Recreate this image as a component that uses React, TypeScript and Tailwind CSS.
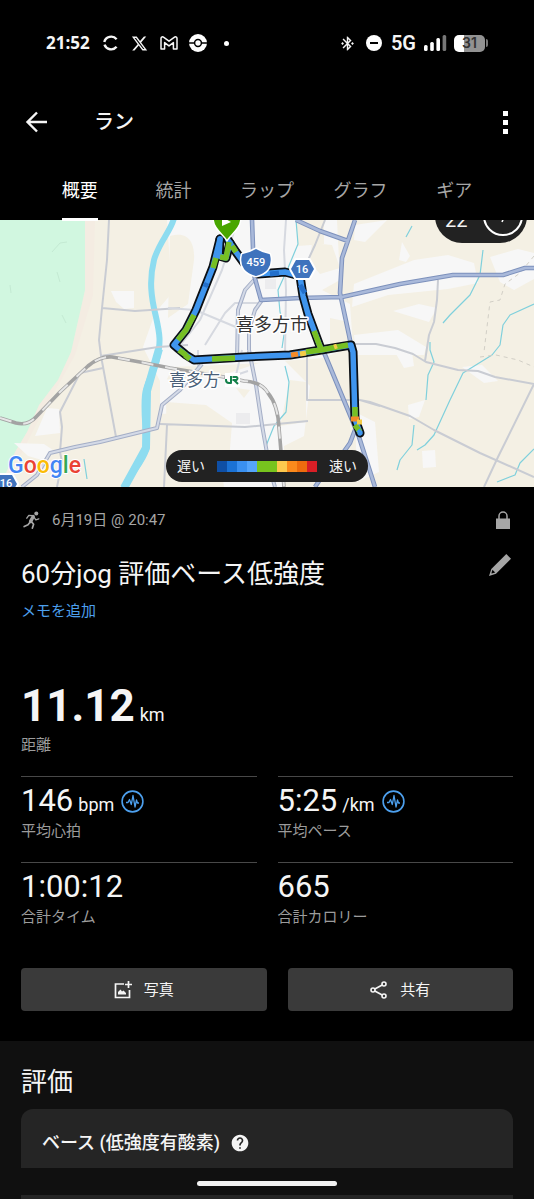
import React from "react";
import { FaXTwitter } from "react-icons/fa6";
import { MdBluetoothConnected, MdHelp } from "react-icons/md";

const TABS = ["概要", "統計", "ラップ", "グラフ", "ギア"];

const PACE_COLORS = [
  "bg-[#0f4fa5]",
  "bg-[#1b72d5]",
  "bg-[#3a90f0]",
  "bg-[#55a5fb]",
  "bg-[#77c41e]",
  "bg-[#77c41e]",
  "bg-[#fdc94e]",
  "bg-[#fb8a1c]",
  "bg-[#ee6c0e]",
  "bg-[#d91f26]",
];

const StatusBar = () => (
  <div className="flex items-center justify-between pl-[46px] pr-[46px] pt-[31px]">
    <div className="flex h-6 items-center">
      <span className="w-[57px] font-['Open_Sans','Inter',sans-serif] text-[17px] font-bold leading-6">21:52</span>
      <svg className="h-4 w-4" viewBox="0 0 16 16" fill="none" stroke="currentColor" strokeWidth="2.4">
        <path d="M1.3 7A7 6.8 0 0 1 13.6 4.2" />
        <path d="M1.5 9.6A7 6.8 0 0 0 13.6 11.8" />
      </svg>
      <FaXTwitter className="ml-3 h-[17px] w-[17px]" />
      <svg className="ml-3 h-[14px] w-[18px]" viewBox="0 0 18 14" fill="none" stroke="currentColor" strokeWidth="1.5" strokeLinejoin="round">
        <path d="M1 2.4V13h3.6V6.6L9 9.9l4.4-3.3V13H17V2.4C17 1 15.4 .4 14.2 1.3L9 5.2 3.8 1.3C2.6 .4 1 1 1 2.4Z" />
      </svg>
      <svg className="ml-[11px] h-[18px] w-[18px]" viewBox="0 0 18 18">
        <circle cx="9" cy="9" r="9" fill="#fff" />
        <path d="M0 9h5M13 9h5" stroke="#000" strokeWidth="1.3" />
        <circle cx="9" cy="9" r="3.4" fill="#fff" stroke="#000" strokeWidth="1.5" />
      </svg>
      <span className="ml-[17px] h-[5px] w-[5px] rounded-full bg-white" />
    </div>
    <div className="flex h-6 items-center">
      <MdBluetoothConnected className="h-[17px] w-[17px]" />
      <span className="ml-[10px] flex h-4 w-4 items-center justify-center rounded-full bg-white">
        <span className="h-[2px] w-2 bg-black" />
      </span>
      <span className="ml-[9px] font-['Roboto',sans-serif] text-[20px] font-semibold leading-6">5G</span>
      <svg className="ml-2 h-4 w-[23px]" viewBox="0 0 23 16" fill="#fff">
        <rect x="0" y="10" width="3.6" height="6" rx="1.5" />
        <rect x="6.2" y="7" width="3.6" height="9" rx="1.5" />
        <rect x="12.4" y="3" width="3.6" height="13" rx="1.5" />
        <rect x="18.6" y="0" width="3.6" height="16" rx="1.5" fill="#777" />
      </svg>
      <span className="ml-[7px] flex h-[17px] w-[31px] items-center justify-center rounded-[5px] bg-linear-to-r from-white from-33% to-[#929292] to-33% font-['Inter',sans-serif] text-[14px] font-semibold leading-4 text-[#333]">
        31
      </span>
      <span className="ml-px h-2 w-[2px] rounded-r bg-[#777]" />
    </div>
  </div>
);

const Header = () => (
  <header className="mt-[42px] flex h-[50px] items-center pl-[23px] pr-[26px]">
    <button type="button" aria-label="戻る">
      <svg className="h-[22px] w-[26px]" viewBox="0 0 26 22" fill="none" stroke="currentColor" strokeWidth="2.4">
        <path d="M24 11H5M14 1.500 4.500 11l9.500 9.500" />
      </svg>
    </button>
    <h1 className="ml-[45px] flex-1 text-[20px] font-medium leading-6">ラン</h1>
    <button type="button" aria-label="メニュー" className="flex flex-col gap-1">
      <span className="h-[5px] w-[5px] bg-white" />
      <span className="h-[5px] w-[5px] bg-white" />
      <span className="h-[5px] w-[5px] bg-white" />
    </button>
  </header>
);

const Tabs = () => (
  <nav className="relative z-10 mt-7 -mb-px grid grid-cols-5 px-[33px]">
    {TABS.map((tab, i) => (
      <button
        type="button"
        key={tab}
        className={
          i === 0
            ? "h-[46px] justify-self-center border-b-[3px] border-white pb-3 text-[18px] leading-6 text-white"
            : "h-[46px] justify-self-center border-b-[3px] border-transparent pb-3 text-[18px] leading-6 text-[#a6a6a6]"
        }
      >
        {tab}
      </button>
    ))}
  </nav>
);

const RouteMap = () => (
  <svg
    className="block h-[267px] w-full bg-[#f4f0e4]"
    viewBox="0 220 534 267"
    preserveAspectRatio="xMidYMid slice"
    fill="none"
    strokeLinejoin="round"
  >
    {/* Land */}
    <rect x="0" y="220" width="534" height="267" fill="#f4f0e4" />
    <path d="M85 220h10l-2 75-18 60-38 68-15 30-22 20v-60z" fill="#f4ece2" />
    <path d="M0 220h85v70l-14 62-13 28-19 25-12 27-12 20-15 35z" fill="#d1f7e0" />
    <g fill="#f7f7f7">
      <path d="M111 291h23v17l-10 1-8-7zM162 311h25v40l-18-14zM35 436l12-28 12 1 1 24zM14 443l30 1 12 8-14 8-14-4z" />
      <path d="M167 220h170l3 60-18 10 28 14 3 42-30 12-80 6-70 3-10 20-20-40 12-34 17-20z" />
      <path d="M160 380l60-4 60-20 30 30-6 50-20 10 0 41h-60l-8-60-20-15-36 2z" />
      <path d="M354 284l60-24 34-5 26 8 4 20-30 6-60 6-36 12zM402 242l8 14-4 6-7-2zM393 311l26-7 18 4-8 14zM354 335l44-5 28 17-2 8h-68zM490 257l28-8 16 4v26l-20 11-14-8zM355 412l20 10 4 50-22 10zM408 405l17-5-6 17-10 2zM422 451l13-1 1 17-13 1zM395 352l17 0 2 14-10 2z" />
      <path d="M355 225l32-5-22 22-11-2zM462 367l20-2 16 16-14 2z" />
    </g>
    <g fill="#f4f0e4">
      <path d="M170 236c20-6 25 9 24 24l-6 44-20 14zM296 220h28v24l-26 2zM312 243l20 2 8 23-20 6-10-12zM330 318l18 4v22l-18 2zM166 402l40 3 26 18-4 52-60 12zM236 388l14 2-6 8zM290 380l16 2v40l-26 4z" />
    </g>
    <path d="M236 413h14v11h-14zM265 279h11v10h-11z" fill="#ececee" />
    <path d="M52 252l8-9 7-1M57 272l3 10M62 315l4 8M10 285l1 8" stroke="#c4ead3" />

    {/* River and streams */}
    <path d="M174 218c-3 13-15 24-20 42-5 20-3 37 2 57 4 18 5 25 1 42-3 14-11 24-12 36-2 20 2 37 1 55-4 13-15 22-23 40" stroke="#8edcf0" strokeWidth="6" />
    <path d="M159 349l-12 42-1 57-22 40" stroke="#8edcf0" strokeWidth="8" />
    <g stroke="#7fd0dc" strokeWidth="1.2">
      <path d="M296 220l2 24-10 24-10 22 2 22 5 16-3 20M285 366l4 16-3 30-12 14-8 20-4 30" />
      <path d="M483 250l-3 25-10 20-20 20-7 8M534 304l-24 11-7 10-3 20-8 10-29 18-13 27-16 35-9 10-8 5M430 342l0 8 4 12-6 13-2 25M414 425l-2 20-12 15-3 10M534 449l-14 14-5 12-18 7M412 226l-6 11M84 459l3 20" />
    </g>

    {/* Minor roads */}
    <g stroke="#c9ccd3" strokeWidth="2">
      <path d="M109 220l-2 40-5 48-3 32 2 16 15 81M102 308l33 3 45-3M101 356l57-9 30-2M103 368l-23 5-20 39 2 15-2 25 2 10-5 25" />
      <path d="M325 220l-10 25-12 26M534 384l-36 73-14 30M354 344l22 0 19 4 18 6 13 8 32 8 20 1 17 6 39 7M438 280l-1 20-3 22-5 13-4 26" />
      <path d="M160 424l85 3 63-6M167 425l-3 62M307 350v50h53l20 6M355 399l15 3 40 14 24 14 46 23 54 24" />
    </g>
    <g stroke="#d6d9e0" strokeWidth="2">
      <path d="M286 220l-2 30 2 40-1 65M236 225l-14 45-22 50-25 32M168 308l27 2 48 20M205 345l20-32 10-10h26M198 350v20M242 350l-6 25 12-4" />
    </g>
    <path d="M534 256l-14 17-15 11-5 16-10 2-6 50M480 357l16-2 22 5 16 7" stroke="#d2cfc6" strokeDasharray="4 4" />

    {/* Main roads */}
    <g stroke="#a4aec6" strokeWidth="4">
      <path d="M22 487l15-12 13-22 25-6 25-5 57-14 5-23 18-15 22-26" />
      <path d="M237 360l1-50 7-20 9-10M249 350l7 35 6 40 8 45 5 17M249 350v-20l6-20 7-10" />
    </g>
    <g stroke="#d4dae7" strokeWidth="2">
      <path d="M22 487l15-12 13-22 25-6 25-5 57-14 5-23 18-15 22-26" />
      <path d="M237 360l1-50 7-20 9-10M249 350l7 35 6 40 8 45 5 17M249 350v-20l6-20 7-10" />
    </g>
    <g stroke="#7d91bc" strokeWidth="4.600">
      <path d="M252 220l2 55 7 25 39-2 42-1 58-13 53-9h50l22-7h9M355 220l-13 38-2 35 9 42 3 15M296 220l24 11 28 10" />
      <path d="M323 350l27 65 9 22 16 50M355 430l-5 13-12 17-13 12-10 15" />
    </g>
    <g stroke="#a9b9da" strokeWidth="2.600">
      <path d="M252 220l2 55 7 25 39-2 42-1 58-13 53-9h50l22-7h9M355 220l-13 38-2 35 9 42 3 15M296 220l24 11 28 10" />
      <path d="M323 350l27 65 9 22 16 50M355 430l-5 13-12 17-13 12-10 15" />
    </g>

    {/* Railway */}
    <path d="M0 418l16 5q12 3 20-6l24-25 28-26q12-10 24-9l28 5 30 6 60 10 14 3q18 1 24 12 10 12 11 35l5 59" stroke="#a3a3a3" strokeWidth="3.600" />
    <path d="M0 418l16 5q12 3 20-6l24-25 28-26q12-10 24-9l28 5 30 6 60 10 14 3q18 1 24 12 10 12 11 35l5 59" stroke="#e6e6e6" strokeWidth="2" strokeDasharray="12 12" />

    {/* Recorded route */}
    <g stroke="#0b0f14" strokeWidth="9" strokeLinecap="round">
      <path d="M228 240l8 12 8 11 14 11 27-2 15 4 3 20 5 18 13 35" />
      <path d="M220 239l-7 28-17 43-10 20-12 15 12 10 8 5 51-3 45-2 31-5 30-5 2 7 2 67 5 14" />
      <path d="M220 239l-1 17 7 2 4-15" />
    </g>
    <g stroke="#3f95ee" strokeWidth="5.500" strokeLinecap="round">
      <path d="M228 240l8 12 8 11 14 11 27-2 15 4 3 20 5 18 13 35" />
      <path d="M220 239l-7 28-17 43-10 20-12 15 12 10 8 5 51-3 45-2 31-5 30-5 2 7 2 67 5 14" />
      <path d="M220 239l-1 17 7 2 4-15" />
    </g>
    <g stroke="#77bf24" strokeWidth="5.500">
      <path d="M229 242l-3 16-6-1M216 258l-3 10M194 315l-8 15-8 10M179 350l7 5M212 359l23-1M314 331l7 18M306 352l15-2 27-5M190 359l-5-4M355 407v13M355 425l5 7M232 246l4 6" />
    </g>
    <path d="M291 355l7-1M351 419h8" stroke="#f58a28" strokeWidth="5" />
    <path d="M300 354l6-1M334 347l3-1M357 422h5" stroke="#f3cb48" strokeWidth="5" />
    <path d="M358 430l3 3" stroke="#3f95ee" strokeWidth="4" />
    <path d="M270 274l9-1M205 287l2-4M300 285l5 8" stroke="#246fca" strokeWidth="5" />

    <path d="M227 241c-3-6-14-12-14-23h28c0 11-11 17-14 23z" fill="#48a600" stroke="#fff" strokeWidth="1.500" />
    <path d="M222 217v9l9-4z" fill="#fff" />

    {/* Road numbers */}
    <path d="M243 255q6-1 13-5 7 4 13 5c3 12-4 18-13 20-9-2-16-8-13-20z" fill="#3f73bd" stroke="#fff" strokeWidth="5" />
    <path d="M243 255q6-1 13-5 7 4 13 5c3 12-4 18-13 20-9-2-16-8-13-20z" fill="#3f73bd" stroke="#3f73bd" strokeWidth="2" />
    <path d="M291 269l5-9h13l5 9-5 9h-13z" fill="#3f73bd" stroke="#fff" strokeWidth="4" />
    <path d="M291 269l5-9h13l5 9-5 9h-13z" fill="#3f73bd" />
    <path d="M-6 484l5-9h13l5 9-5 9H-1z" fill="#3f73bd" stroke="#fff" strokeWidth="4" />
    <path d="M-6 484l5-9h13l5 9-5 9H-1z" fill="#3f73bd" />
    <g className="font-['Roboto',sans-serif] font-medium" fill="#fff" textAnchor="middle">
      <text x="256" y="266" fontSize="11">459</text>
      <text x="302" y="273" fontSize="11">16</text>
      <text x="6" y="487" fontSize="11">16</text>
    </g>

    {/* Place names */}
    <g className="font-['Noto_Sans_CJK_JP',sans-serif]" stroke="#fff" strokeWidth="3" paintOrder="stroke">
      <text x="236" y="331" fontSize="18" fill="#333">喜多方市</text>
      <text x="169" y="386" fontSize="17" fill="#4a5f78">喜多方</text>
    </g>
    <rect x="225" y="373" width="15" height="14" fill="#fff" />
    <g stroke="#14804a" strokeWidth="2">
      <path d="M226 379v1q0 3 3 3h2V376" />
      <path d="M232.500 377h4q2 1 0 3h-4M234 380l4 4" />
    </g>

    {/* Map provider mark */}
    <text
      className="font-['Roboto',sans-serif] font-medium"
      x="8"
      y="473"
      fontSize="23"
      stroke="#fff"
      strokeWidth="2"
      paintOrder="stroke"
    >
      <tspan fill="#4285f4">G</tspan>
      <tspan fill="#ea4335">o</tspan>
      <tspan fill="#fbbc05">o</tspan>
      <tspan fill="#4285f4">g</tspan>
      <tspan fill="#34a853">l</tspan>
      <tspan fill="#ea4335">e</tspan>
    </text>
  </svg>
);

const MapSection = () => (
  <section className="relative overflow-hidden">
    <RouteMap />
    <div className="absolute -top-[31px] right-[7px] flex h-[54px] w-[92px] items-center justify-between rounded-full bg-[#222] pl-[10px] pr-1">
      <span className="pt-2 text-[20px] leading-6">22</span>
      <span className="flex h-10 w-10 items-center justify-center rounded-full border-2 border-white">
        <svg className="h-6 w-6" viewBox="0 0 24 24" stroke="#fff" strokeWidth="1.500" fill="none">
          <path d="M16 6l-5 12" />
        </svg>
      </span>
    </div>
    <div className="absolute bottom-[5px] left-1/2 flex h-8 -translate-x-1/2 items-center rounded-full bg-[#222] px-[11px] text-[14px] leading-5 whitespace-nowrap">
      <span>遅い</span>
      <div className="mx-3 flex">
        {PACE_COLORS.map((color, i) => (
          <span key={i} className={`h-[11px] w-[10px] ${color}`} />
        ))}
      </div>
      <span>速い</span>
    </div>
  </section>
);

const RunnerIcon = () => (
  <svg className="ml-[2px] h-[18px] w-[17px]" viewBox="0 0 17 18" fill="none" stroke="currentColor" strokeLinecap="round" strokeLinejoin="round">
    <circle cx="13.300" cy="2.400" r="2" fill="currentColor" stroke="none" />
    <path d="M10.200 5.600 7.600 10.400" strokeWidth="3.400" />
    <path d="M9.600 4.600 5.800 4.300 3.800 7.200M11 6.200l1.800 2.600 3-1" strokeWidth="1.300" />
    <path d="M7 11.200 5 13.800 1.200 15.600M8.400 10.600l2.200 2.600-1.200 3.900" strokeWidth="1.700" />
  </svg>
);

const PulseIcon = () => (
  <svg className="ml-[7px] h-[23px] w-[23px]" viewBox="0 0 23 23" fill="none" stroke="#4da0ee">
    <circle cx="11.500" cy="11.500" r="10.400" strokeWidth="1.600" />
    <path d="M5 12.500h2l1.500-3 1.800 5L12 5.500l2 11.500 1.500-7 1 3H18" strokeWidth="1.300" strokeLinejoin="round" />
  </svg>
);

interface StatProps {
  value: string;
  unit?: string;
  label: string;
  pulse?: boolean;
}

const Stat = ({ value, unit, label, pulse }: StatProps) => (
  <div className="h-[86px] border-t border-[#484848] pt-[6px]">
    <div className="flex h-9 items-center">
      <p className="text-[31px] leading-9">
        {value}
        {unit && <span className="ml-[5px] text-[18px] leading-none">{unit}</span>}
      </p>
      {pulse && <PulseIcon />}
    </div>
    <p className="text-[15px] leading-6 text-[#9c9c9c]">{label}</p>
  </div>
);

const Summary = () => (
  <section className="px-[21px] pb-[30px] pt-[21px]">
    <div className="flex h-6 items-center text-[#a6a6a6]">
      <RunnerIcon />
      <p className="ml-3 flex-1 text-[15px] leading-6">6月19日 @ 20:47</p>
      <svg className="mr-[3px] h-[18px] w-[14px]" viewBox="0 0 14 18">
        <rect x="0" y="7.500" width="14" height="10.500" fill="#a6a6a6" />
        <path d="M3 8V5a4 4 0 0 1 8 0v3" fill="none" stroke="#a6a6a6" strokeWidth="1.500" />
      </svg>
    </div>

    <div className="mt-[22px] flex items-start justify-between">
      <h2 className="text-[26px] leading-10">60分jog 評価ベース低強度</h2>
      <button type="button" aria-label="編集">
        <svg className="mr-[2px] h-[22px] w-[22px]" viewBox="0 0 22 22" fill="#a6a6a6">
          <path d="M17.300 0 22 4.700 7 19.700 0 22l2.300-7z" />
          <path d="M3.400 15.800 6.200 18.600 2.800 19.600 2.400 19.200z" fill="#000" />
        </svg>
      </button>
    </div>
    <a href="#memo" className="mt-[5px] block w-fit text-[15px] leading-6 text-[#4da0ee]">
      メモを追加
    </a>

    <div className="mt-14">
      <p className="text-[44px] font-bold leading-[54px]">
        11.12<span className="ml-[5px] text-[18px] font-normal leading-none">km</span>
      </p>
      <p className="text-[15px] leading-6 text-[#9c9c9c]">距離</p>
    </div>

    <div className="mt-[19px] grid grid-cols-2 gap-x-[21px]">
      <Stat value="146" unit="bpm" label="平均心拍" pulse />
      <Stat value="5:25" unit="/km" label="平均ペース" pulse />
      <Stat value="1:00:12" label="合計タイム" />
      <Stat value="665" label="合計カロリー" />
    </div>

    <div className="mt-5 flex gap-[21px]">
      <button type="button" className="flex h-[43px] flex-[12] items-center justify-center gap-3 rounded bg-[#3a3a3a] text-[15px] leading-6">
        <svg className="h-[18px] w-[18px]" viewBox="0 0 18 18" fill="none" stroke="currentColor" strokeWidth="1.700">
          <path d="M10 3H1.500v13.500h14V9M14.500 0v7M11 3.500h7" />
          <path d="M4 13.500V11l2.500-2.500 1.500 2 1.500-1 2.500 2.500v1.500z" fill="currentColor" stroke="none" />
        </svg>
        写真
      </button>
      <button type="button" className="flex h-[43px] flex-[11] items-center justify-center gap-3 rounded bg-[#3a3a3a] text-[15px] leading-6">
        <svg className="h-[18px] w-[18px]" viewBox="0 0 18 18" fill="none" stroke="currentColor" strokeWidth="1.600">
          <circle cx="3" cy="9" r="2" />
          <circle cx="14" cy="3" r="2" />
          <circle cx="14" cy="15" r="2" />
          <path d="M4.800 8 12.200 4M4.800 10l7.400 4" />
        </svg>
        共有
      </button>
    </div>
  </section>
);

const Evaluation = () => (
  <section className="relative flex flex-1 flex-col bg-[#101010] px-[21px] pt-[23px]">
    <h2 className="text-[26px] leading-9">評価</h2>
    <div className="mt-[9px] flex h-[59px] items-center rounded-t-xl bg-[#252525] px-[21px] pt-[9px]">
      <h3 className="text-[18px] font-medium leading-6">ベース (低強度有酸素)</h3>
      <button type="button" aria-label="ヘルプ" className="ml-[10px]">
        <MdHelp className="h-5 w-5" />
      </button>
    </div>
    <div className="mt-[27px] min-h-1 flex-1 bg-[#252525]" />
    <div className="absolute bottom-[13px] left-1/2 h-[5px] w-[140px] -translate-x-1/2 rounded-full bg-[#f2f2f2]" />
  </section>
);

export default function App() {
  return (
    <main className="flex min-h-screen flex-col bg-black font-['Roboto','Noto_Sans_CJK_JP',sans-serif] text-[#f5f5f5]">
      <StatusBar />
      <Header />
      <Tabs />
      <MapSection />
      <Summary />
      <Evaluation />
    </main>
  );
}
